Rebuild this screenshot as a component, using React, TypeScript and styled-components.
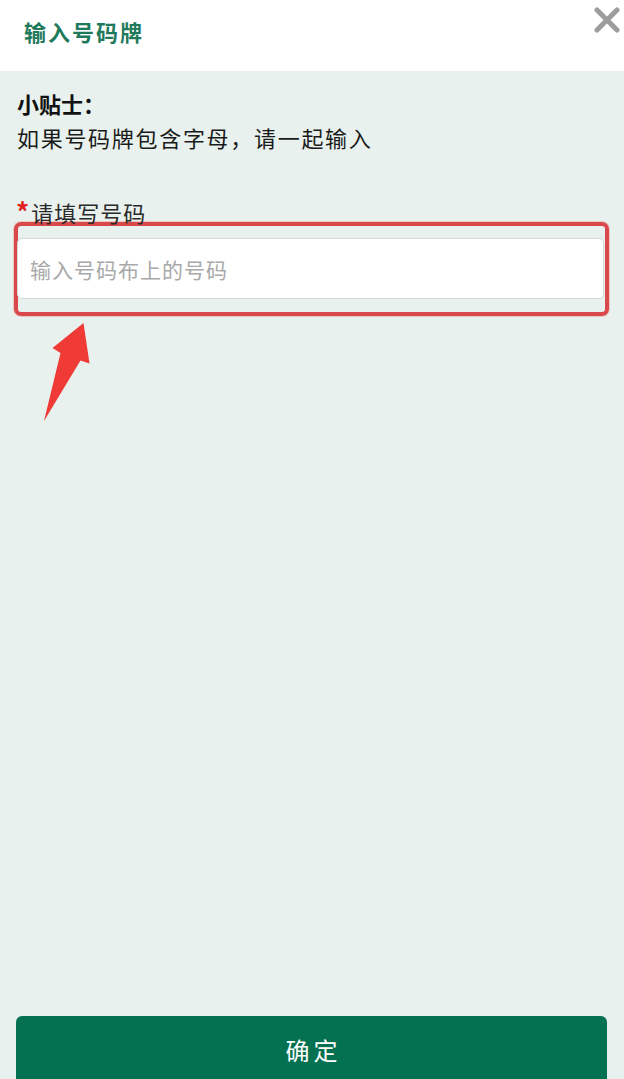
import React from 'react'
import styled, { createGlobalStyle } from 'styled-components'

const GlobalStyle = createGlobalStyle`
	html, body {
		margin: 0;
		padding: 0;
		height: 100%;
	}
	body {
		font-family: 'Noto Sans CJK SC', 'Noto Sans', sans-serif;
		background: #e8f1ed;
		color: #1c1c1c;
	}
	#root {
		height: 100%;
	}
`

export default function App() {
	return (
		<>
			<GlobalStyle />
			<Page>
				{/* Title bar with close button */}
				<Header>
					<Title>输入号码牌</Title>
					<CloseButton aria-label='关闭'>
						<svg width='26' height='26' viewBox='0 0 26 26'>
							<path d='M3 3 L23 23 M23 3 L3 23' stroke='#9c9c9c' strokeWidth='5' strokeLinecap='round' />
						</svg>
					</CloseButton>
				</Header>

				<Body>
					<TipTitle>小贴士：</TipTitle>
					<TipText>如果号码牌包含字母，请一起输入</TipText>

					<Field>
						<Label>
							<Star>*</Star>请填写号码
						</Label>
						<Highlight>
							<Input placeholder='输入号码布上的号码' />
						</Highlight>

						{/* Annotation arrow pointing at the input */}
						<Arrow width='56' height='108' viewBox='0 0 56 108'>
							<polygon points='43.5,5 12.5,30 20.5,35 4,103 40.5,42.5 49.5,45.5' fill='#f03a36' />
						</Arrow>
					</Field>

					<ConfirmButton>确定</ConfirmButton>
				</Body>
			</Page>
		</>
	)
}

const Page = styled.div`
	display: flex;
	flex-direction: column;
	height: 1079px;
	overflow: hidden;
`
const Header = styled.div`
	display: flex;
	justify-content: space-between;
	align-items: center;
	height: 71px;
	padding: 0 4px 0 24px;
	background: #ffffff;
	flex-shrink: 0;
`
const Title = styled.div`
	font-size: 22px;
	font-weight: 700;
	color: #1f7a5b;
	letter-spacing: 2px;
	margin-top: -9px;
`
const CloseButton = styled.button`
	align-self: flex-start;
	margin-top: 7px;
	padding: 0;
	border: none;
	background: none;
	width: 26px;
	height: 26px;
	cursor: pointer;
`
const Body = styled.div`
	display: flex;
	flex-direction: column;
	flex: 1;
	padding: 15px 15px 0 17px;
	background: #e8f1ed;
`
const TipTitle = styled.div`
	font-size: 22px;
	font-weight: 700;
	line-height: 34px;
	color: #111;
`
const TipText = styled.div`
	font-size: 22px;
	line-height: 34px;
	color: #1a1a1a;
	letter-spacing: 1.7px;
`
const Field = styled.div`
	position: relative;
	margin-top: 45px;
`
const Label = styled.div`
	font-size: 22px;
	line-height: 24px;
	color: #2a2a2a;
	letter-spacing: 1px;
	margin-left: -1px;
`
const Star = styled.span`
	color: #e0221d;
	font-weight: 700;
	font-size: 26px;
	margin-right: 1px;
`
const Highlight = styled.div`
	margin: -2px 0 0 -3px;
	padding: 12px 1px 13px 0;
	border: 4px solid #d9484a;
	border-radius: 7px;
	box-shadow: 0 0 0 1px rgba(240, 120, 120, 0.35);
`
const Input = styled.input`
	display: block;
	box-sizing: border-box;
	width: calc(100% + 1px);
	height: 61px;
	margin-left: -1px;
	padding: 0 12px;
	border: 1px solid #d3dad7;
	border-radius: 5px;
	background: #ffffff;
	font-family: 'Noto Sans CJK SC', sans-serif;
	font-size: 21px;
	outline: none;

	&::placeholder {
		color: #a9a9a9;
		letter-spacing: 1px;
	}
`
const Arrow = styled.svg`
	position: absolute;
	left: 23px;
	top: 119px;
`
const ConfirmButton = styled.button`
	margin: auto 2px 0 -1px;
	height: 63px;
	border: none;
	border-radius: 6px 6px 0 0;
	background: #047250;
	color: #ffffff;
	font-family: 'Noto Sans CJK SC', sans-serif;
	font-size: 24px;
	letter-spacing: 4px;
	padding: 4px 0 0 4px;
	cursor: pointer;
`
